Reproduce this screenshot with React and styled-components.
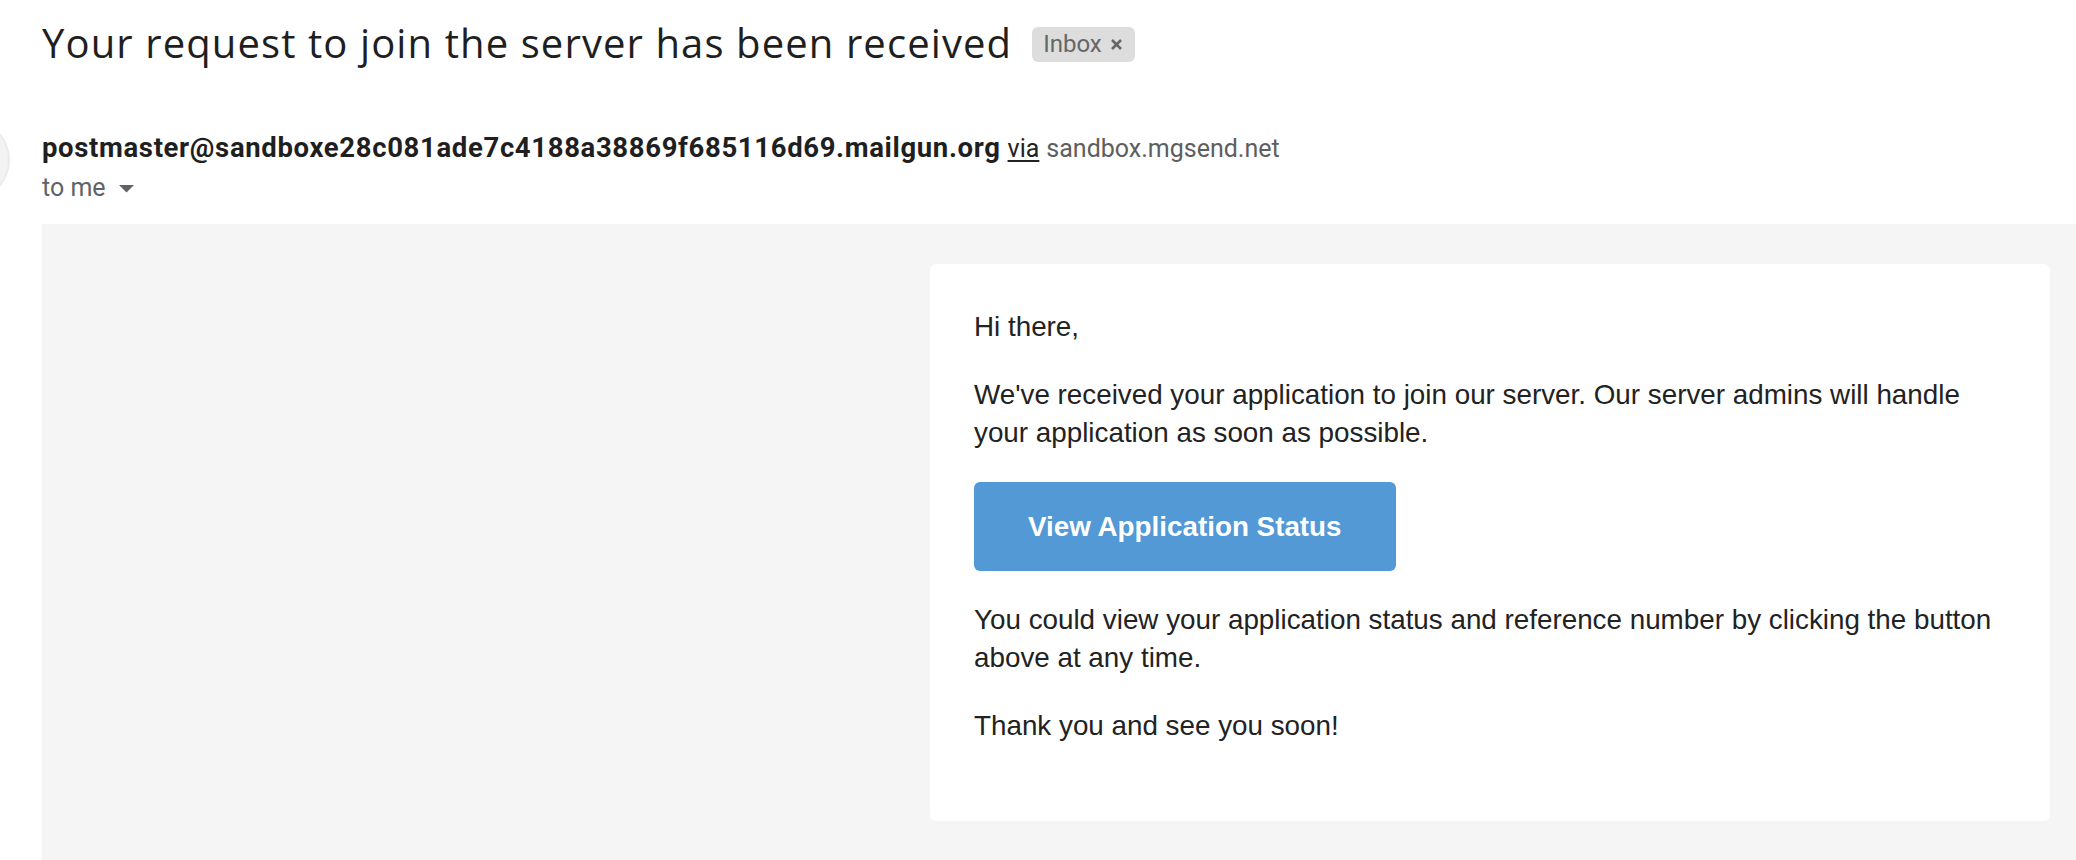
import React from 'react'
import styled, { createGlobalStyle } from 'styled-components'

const GlobalStyle = createGlobalStyle`
  html, body {
    margin: 0;
    padding: 0;
    background: #fff;
    overflow: hidden;
  }
  body {
    font-family: Roboto, 'Liberation Sans', Arial, sans-serif;
    color: #1f1f1f;
  }
`

function App() {
  return (
    <Page>
      <GlobalStyle />
      <TitleRow>
        <Subject>Your request to join the server has been received</Subject>
        <Label>
          Inbox
          <svg width="13" height="13" viewBox="0 0 13 13">
            <path d="M2 2 L11 11 M11 2 L2 11" stroke="#666" strokeWidth="2.6" strokeLinecap="butt" />
          </svg>
        </Label>
      </TitleRow>

      <SenderRow>
        <Avatar />
        <SenderInfo>
          <FromLine>
            <SenderName>postmaster@sandboxe28c081ade7c4188a38869f685116d69.mailgun.org</SenderName>
            <Via>via</Via>
            <Domain>sandbox.mgsend.net</Domain>
          </FromLine>
          <ToMe>
            to me
            <svg width="15" height="8" viewBox="0 0 15 8">
              <path d="M0 0 L15 0 L7.5 7.5 Z" fill="#5f6368" />
            </svg>
          </ToMe>
        </SenderInfo>
      </SenderRow>

      <MailBody>
        <Card>
          <Paragraph>Hi there,</Paragraph>
          <Paragraph>
            We've received your application to join our server. Our server admins will handle your
            application as soon as possible.
          </Paragraph>
          <ActionButton href="#">View Application Status</ActionButton>
          <Paragraph>
            You could view your application status and reference number by clicking the button above
            at any time.
          </Paragraph>
          <Paragraph>Thank you and see you soon!</Paragraph>
        </Card>
      </MailBody>
    </Page>
  )
}

const Page = styled.div`
  padding-left: 42px;
  height: 860px;
  overflow: hidden;
`

const TitleRow = styled.div`
  display: flex;
  align-items: center;
  gap: 20px;
  margin-top: 19px;
  height: 48px;
`

const Subject = styled.h1`
  margin: 0;
  font-family: 'Open Sans', Roboto, sans-serif;
  font-size: 40px;
  line-height: 48px;
  font-weight: 400;
  letter-spacing: 1.1px;
  color: #1f1f1f;
  white-space: nowrap;
`

const Label = styled.span`
  display: inline-flex;
  align-items: center;
  gap: 8px;
  height: 35px;
  padding: 0 12px 0 11px;
  margin-top: 2px;
  background: #dddddd;
  border-radius: 6px;
  color: #666;
  font-size: 24px;
  font-family: Roboto, sans-serif;
`

const SenderRow = styled.div`
  display: flex;
  align-items: flex-start;
  gap: 32px;
  margin-top: 65px;
`

const Avatar = styled.div`
  flex: 0 0 80px;
  width: 80px;
  height: 80px;
  margin-left: -112px;
  margin-top: -12px;
  border-radius: 50%;
  background: #f3f3f3;
  box-shadow: inset 0 0 0 2px #ececec;
`

const SenderInfo = styled.div`
  display: flex;
  flex-direction: column;
  gap: 8px;
`

const FromLine = styled.div`
  display: flex;
  align-items: baseline;
  gap: 7px;
  line-height: 32px;
  white-space: nowrap;
`

const SenderName = styled.span`
  font-family: Roboto, sans-serif;
  font-weight: 700;
  font-size: 27.5px;
  letter-spacing: 0.65px;
  color: #1f1f1f;
`

const Via = styled.span`
  font-size: 25px;
  color: #222;
  text-decoration: underline;
  text-underline-offset: 3px;
`

const Domain = styled.span`
  font-size: 25px;
  color: #5e5e5e;
`

const ToMe = styled.div`
  display: flex;
  align-items: center;
  gap: 13px;
  font-size: 25px;
  line-height: 30px;
  color: #5f6368;

  svg {
    margin-top: 2px;
  }
`

const MailBody = styled.div`
  display: flex;
  justify-content: flex-end;
  margin-top: 21px;
  padding: 40px 26px 40px 0;
  background: #f5f5f5;
`

const Card = styled.div`
  width: 1120px;
  box-sizing: border-box;
  padding: 44px 44px 46px 44px;
  background: #fff;
  border-radius: 6px;
  font-family: 'Liberation Sans', Helvetica, Arial, sans-serif;
  font-size: 27.8px;
  line-height: 38px;
  color: #222;
`

const Paragraph = styled.p`
  margin: 0 0 30px;
`

const ActionButton = styled.a`
  display: inline-block;
  margin: 0 0 30px;
  padding: 28px 54px;
  background: #5299d6;
  border-radius: 6px;
  color: #fff;
  font-weight: 700;
  font-size: 27.8px;
  line-height: 33px;
  text-decoration: none;
`

export default App
